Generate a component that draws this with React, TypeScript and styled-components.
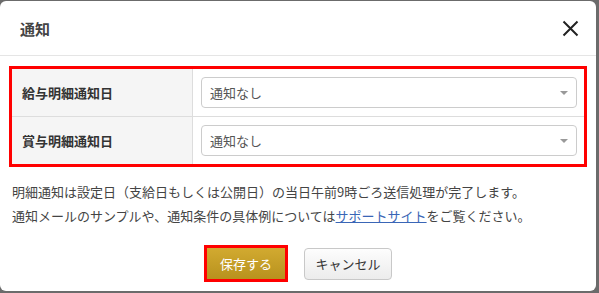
import styled, { createGlobalStyle } from "styled-components";

const GlobalStyle = createGlobalStyle`
  html, body {
    margin: 0;
    padding: 0;
    background: #6b6b6b;
  }
  body {
    font-family: "Noto Sans CJK JP", "Noto Sans", sans-serif;
    color: #333;
  }
`;

const Modal = styled.div`
  width: 596px;
  height: 290px;
  margin-top: 1px;
  background: #fff;
  border-radius: 6px;
  display: flex;
  flex-direction: column;
  overflow: hidden;
`;

const Header = styled.div`
  height: 54px;
  border-bottom: 1px solid #e5e5e5;
  display: flex;
  align-items: center;
  justify-content: space-between;
  padding: 0 17px 0 20px;
`;

const Title = styled.h2`
  margin: 0;
  font-size: 15px;
  font-weight: bold;
  color: #444;
`;

const CloseButton = styled.button`
  border: none;
  background: none;
  padding: 0;
  width: 18px;
  height: 18px;
  display: flex;
  align-items: center;
  justify-content: center;
  cursor: pointer;
`;

const Body = styled.div`
  padding: 10px 9px 0 9px;
`;

const Highlight = styled.div`
  border: 3px solid #ff0000;
`;

const Table = styled.div`
  display: grid;
  grid-template-columns: 181px 1fr;
`;

const Label = styled.div<{ $last?: boolean }>`
  background: #f5f5f5;
  border-right: 1px solid #ddd;
  border-bottom: ${(p) => (p.$last ? "none" : "1px solid #ddd")};
  padding-left: 10px;
  display: flex;
  align-items: center;
  font-size: 13px;
  font-weight: bold;
  color: #333;
`;

const Cell = styled.div<{ $last?: boolean }>`
  border-bottom: ${(p) => (p.$last ? "none" : "1px solid #ddd")};
  padding: 8px 7px 8px 8px;
`;

const Select = styled.div`
  height: 29px;
  border: 1px solid #ccc;
  border-radius: 4px;
  display: flex;
  align-items: center;
  justify-content: space-between;
  padding: 0 8px 0 8px;
  font-size: 13px;
  color: #555;
`;

const Caret = styled.span`
  width: 0;
  height: 0;
  border-left: 4px solid transparent;
  border-right: 4px solid transparent;
  border-top: 4px solid #999;
`;

const Note = styled.p`
  margin: 13px 0 0 3px;
  font-size: 13px;
  line-height: 24px;
  color: #444;
`;

const Link = styled.a`
  color: #3a66b6;
  text-decoration: underline;
`;

const Actions = styled.div`
  display: flex;
  justify-content: center;
  align-items: center;
  gap: 16px;
  margin-top: 17px;
`;

const SaveButton = styled.button`
  width: 84px;
  height: 37px;
  border: 3px solid #ff0000;
  background: linear-gradient(#d2aa30, #b8921e);
  color: #fff;
  font-family: inherit;
  font-size: 13px;
  padding: 0;
`;

const CancelButton = styled.button`
  width: 88px;
  height: 32px;
  border: 1px solid #c8c8c8;
  border-radius: 4px;
  background: linear-gradient(#fdfdfd, #ececec);
  color: #333;
  font-family: inherit;
  font-size: 13px;
  padding: 0;
`;

const rows = ["給与明細通知日", "賞与明細通知日"];

export default function App() {
  return (
    <>
      <GlobalStyle />
      <Modal>
        <Header>
          <Title>通知</Title>
          <CloseButton aria-label="閉じる">
            <svg width="17" height="17" viewBox="0 0 17 17">
              <path d="M1.5 1.5 L15.5 15.5 M15.5 1.5 L1.5 15.5" stroke="#222" strokeWidth="2" fill="none" />
            </svg>
          </CloseButton>
        </Header>
        <Body>
          <Highlight>
            <Table>
              {rows.map((label, i) => {
                const last = i === rows.length - 1;
                return [
                  <Label key={label + "l"} $last={last}>{label}</Label>,
                  <Cell key={label + "c"} $last={last}>
                    <Select>
                      <span>通知なし</span>
                      <Caret />
                    </Select>
                  </Cell>,
                ];
              })}
            </Table>
          </Highlight>
          <Note>
            明細通知は設定日（支給日もしくは公開日）の当日午前9時ごろ送信処理が完了します。
            <br />
            通知メールのサンプルや、通知条件の具体例については<Link href="#">サポートサイト</Link>をご覧ください。
          </Note>
          <Actions>
            <SaveButton>保存する</SaveButton>
            <CancelButton>キャンセル</CancelButton>
          </Actions>
        </Body>
      </Modal>
    </>
  );
}
